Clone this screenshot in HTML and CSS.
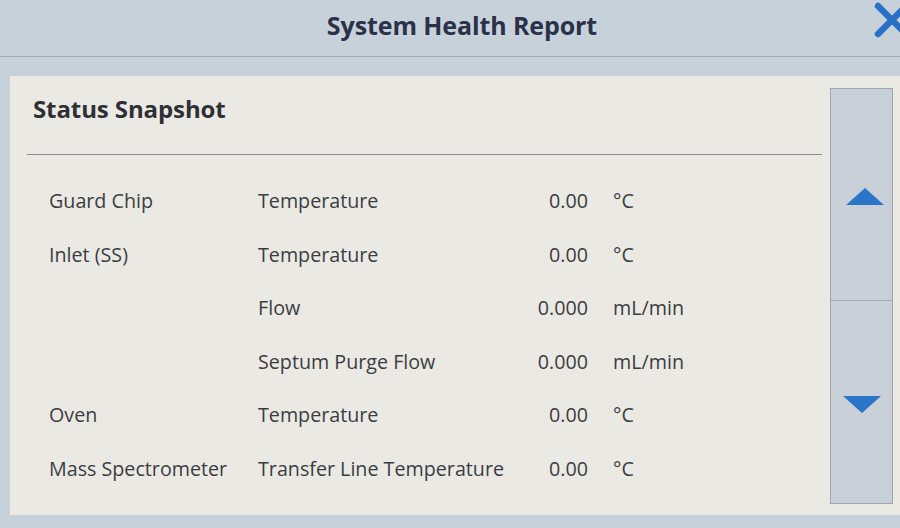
FILE: index.html
```html
<!DOCTYPE html>
<html lang="en">
<head>
<meta charset="utf-8">
<title>System Health Report</title>
<link rel="stylesheet" href="styles.css">
</head>
<body>
<header class="topbar">
  <h1 class="title">System Health Report</h1>
  <button class="close" aria-label="Close">
    <svg width="40" height="40" viewBox="0 0 40 40"><path d="M6 6 L34 34 M34 6 L6 34" stroke="#2a6fc6" stroke-width="6.5" stroke-linecap="round" fill="none"/></svg>
  </button>
</header>
<main class="panel">
  <section class="content">
    <h2 class="heading">Status Snapshot</h2>
    <div class="divider"></div>
    <div class="table">
      <div class="row"><span class="c1">Guard Chip</span><span class="c2">Temperature</span><span class="val">0.00</span><span class="unit">°C</span></div>
      <div class="row"><span class="c1">Inlet (SS)</span><span class="c2">Temperature</span><span class="val">0.00</span><span class="unit">°C</span></div>
      <div class="row"><span class="c1"></span><span class="c2">Flow</span><span class="val">0.000</span><span class="unit">mL/min</span></div>
      <div class="row"><span class="c1"></span><span class="c2">Septum Purge Flow</span><span class="val">0.000</span><span class="unit">mL/min</span></div>
      <div class="row"><span class="c1">Oven</span><span class="c2">Temperature</span><span class="val">0.00</span><span class="unit">°C</span></div>
      <div class="row"><span class="c1">Mass Spectrometer</span><span class="c2">Transfer Line Temperature</span><span class="val">0.00</span><span class="unit">°C</span></div>
    </div>
  </section>
  <aside class="scroll">
    <button class="sbtn up" aria-label="Scroll up"><span class="tri-up"></span></button>
    <button class="sbtn down" aria-label="Scroll down"><span class="tri-down"></span></button>
  </aside>
</main>
</body>
</html>
```
FILE: styles.css
```css
html, body {
  margin: 0;
  padding: 0;
}
body {
  width: 900px;
  height: 528px;
  overflow: hidden;
  background: #c7d1da;
  font-family: "Open Sans", "Noto Sans", sans-serif;
  color: #3b3d42;
}
.topbar {
  height: 57px;
  border-bottom: 1px solid #a3acb5;
  display: flex;
  align-items: center;
  justify-content: center;
  position: relative;
  box-sizing: border-box;
}
.title {
  margin: 0 0 6px 24px;
  font-size: 25px;
  font-weight: 700;
  letter-spacing: -0.1px;
  color: #2b3149;
}
.close {
  position: absolute;
  right: -12px;
  top: 0;
  width: 40px;
  height: 40px;
  padding: 0;
  border: 0;
  background: none;
}
.panel {
  margin: 19px 0 0 10px;
  height: 439px;
  background: #ebe9e3;
  display: flex;
  box-sizing: border-box;
}
.content {
  flex: 1;
}
.heading {
  margin: 0;
  padding: 16px 0 0 23px;
  box-sizing: border-box;
  height: 78px;
  font-size: 24px;
  font-weight: 700;
  color: #2e3035;
  letter-spacing: -0.1px;
}
.divider {
  margin-left: 17px;
  height: 1px;
  background: #8c8d8f;
}
.table {
  padding-top: 19px;
  padding-left: 39px;
}
.row {
  display: grid;
  grid-template-columns: 209px 250px 80px auto;
  height: 53.5px;
  line-height: 53px;
  font-size: 19.7px;
  color: #3b3d42;
  white-space: nowrap;
}
.val {
  text-align: right;
}
.unit {
  padding-left: 25px;
}
.scroll {
  width: 63px;
  margin: 12px 7px 11px 8px;
  border: 1px solid #9ea5ad;
  background: #c9d0d7;
  display: flex;
  flex-direction: column;
  box-sizing: border-box;
}
.sbtn {
  border: 0;
  padding: 0;
  background: none;
  display: flex;
  justify-content: center;
  align-items: center;
}
.up {
  height: 212px;
  border-bottom: 1px solid #9ea5ad;
  padding-top: 4px;
  padding-left: 6px;
}
.down {
  flex: 1;
  padding-top: 5px;
}
.tri-up {
  width: 0;
  height: 0;
  border-left: 19px solid transparent;
  border-right: 19px solid transparent;
  border-bottom: 17px solid #2a75c8;
}
.tri-down {
  width: 0;
  height: 0;
  border-left: 19px solid transparent;
  border-right: 19px solid transparent;
  border-top: 17px solid #2a75c8;
}
```
